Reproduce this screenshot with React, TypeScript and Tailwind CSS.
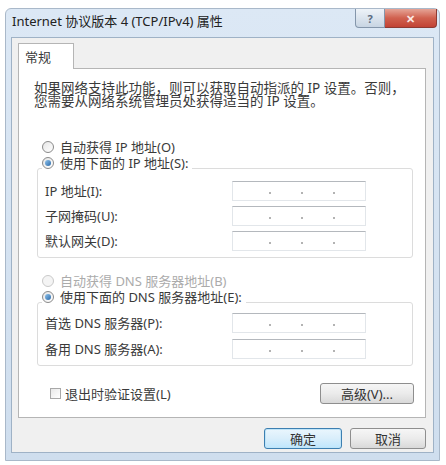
import React from "react";

const font = "font-['Noto_Sans','Noto_Sans_CJK_SC',sans-serif]";

const Radio = ({ checked, disabled }: { checked?: boolean; disabled?: boolean }) => (
  <span
    className={`flex h-[12px] w-[12px] shrink-0 items-center justify-center rounded-full border ${
      disabled ? "border-[#c9c9c9] bg-[#f4f4f4]" : "border-[#8a8a8a] bg-gradient-to-br from-[#e6e6e6] to-[#ffffff]"
    }`}
  >
    {checked && <span className="h-[6px] w-[6px] rounded-full bg-gradient-to-br from-[#8fc3ec] to-[#2a6aa8]" />}
  </span>
);

const RadioRow = ({
  label,
  checked,
  disabled,
  legend,
}: {
  label: string;
  checked?: boolean;
  disabled?: boolean;
  legend?: boolean;
}) => (
  <div
    className={`flex h-[16px] w-fit items-center gap-[6px] ml-[23px] pr-[4px] ${legend ? "relative z-10 bg-white" : ""}`}
  >
    <Radio checked={checked} disabled={disabled} />
    <span className={`text-[13px] leading-[16px] whitespace-pre ${disabled ? "text-[#ababab]" : "text-[#3a3a3a]"}`}>
      {label}
    </span>
  </div>
);

const IpField = () => (
  <div className="flex h-[20px] w-[134px] items-center border border-[#e2e6ea] border-t-[#b4b8bd] bg-white pl-[36px]">
    {[0, 1, 2].map((i) => (
      <span key={i} className="flex w-[33px] pt-[4px]">
        <span className="h-[2px] w-[2px] rounded-full bg-[#9a9a9a]" />
      </span>
    ))}
  </div>
);

const FieldRow = ({ label }: { label: string }) => (
  <div className="flex h-[20px] items-center">
    <span className="w-[187px] text-[13px] leading-[16px] text-[#3a3a3a] whitespace-pre">{label}</span>
    <IpField />
  </div>
);

const Button = ({ label, primary, className = "" }: { label: string; primary?: boolean; className?: string }) => (
  <button
    className={`flex h-[21px] items-center justify-center rounded-[3px] border text-[13px] leading-[16px] text-[#333] ${
      primary
        ? "border-[#3c7fb1] bg-gradient-to-b from-[#eaf6fd] via-[#d9eefb] to-[#bee6fd] shadow-[inset_0_0_0_1px_#bfe4f8]"
        : "border-[#8e8e8e] bg-gradient-to-b from-[#f6f6f6] via-[#ebebeb] to-[#d9d9d9]"
    } ${className}`}
  >
    {label}
  </button>
);

export default function App() {
  return (
    <div className={`h-[465px] w-[446px] bg-white pl-[5px] pt-[8px] ${font}`}>
      <div className="flex h-[453px] w-[435px] flex-col rounded-t-[6px] border border-[#a9b8c9] bg-gradient-to-b from-[#dce8f5] to-[#cfdeee] px-[5px] pb-[7px]">
        {/* title bar */}
        <div className="-mr-[3px] flex h-[28px] items-start justify-between">
          <span className="pl-[1px] pt-[4px] text-[13px] leading-[16px] text-[#222]">
            Internet 协议版本 4 (TCP/IPv4) 属性
          </span>
          <div className="flex">
            <div className="flex h-[19px] w-[30px] items-center justify-center rounded-bl-[4px] border border-t-0 border-[#8496ab] bg-gradient-to-b from-[#eef3f8] to-[#c8d5e3] text-[11px] font-bold leading-none text-[#5a6b80]">
              ?
            </div>
            <div className="flex h-[19px] w-[52px] items-center justify-center rounded-br-[4px] border border-l-0 border-t-0 border-[#8e3a32] bg-gradient-to-b from-[#e5a497] via-[#d0614f] to-[#c24335] text-[11px] font-bold leading-none text-[#fbe9e6]">
              ✕
            </div>
          </div>
        </div>

        {/* client area */}
        <div className="flex flex-1 flex-col border border-[#9fb2c6] bg-[#f0f0f0] pl-[6px] pr-[7px] pt-[5px]">
          <div className="relative z-10 -mb-[1px] flex h-[26px] w-[56px] items-center border border-b-0 border-[#b5b5b5] bg-white pl-[6px]">
            <span className="text-[13px] leading-[16px] text-[#3a3a3a]">常规</span>
          </div>

          <div className="flex h-[350px] flex-col border border-[#b5b5b5] bg-white pt-[13px]">
            <p className="whitespace-nowrap pl-[15px] text-[13.5px] leading-[13px] text-[#3a3a3a]">
              如果网络支持此功能，则可以获取自动指派的 IP 设置。否则，
              <br />
              您需要从网络系统管理员处获得适当的 IP 设置。
            </p>

            <div className="mt-[31px]">
              <RadioRow label="自动获得 IP 地址(O)" />
              <RadioRow label="使用下面的 IP 地址(S):" checked legend />
              <div className="-mt-[3px] ml-[18px] mr-[12px] flex flex-col gap-[5px] rounded-[3px] border border-[#dcdcdc] pb-[6px] pl-[7px] pt-[12px]">
                <FieldRow label="IP 地址(I):" />
                <FieldRow label="子网掩码(U):" />
                <FieldRow label="默认网关(D):" />
              </div>
            </div>

            <div className="mt-[15px]">
              <RadioRow label="自动获得 DNS 服务器地址(B)" disabled />
              <RadioRow label="使用下面的 DNS 服务器地址(E):" checked legend />
              <div className="-mt-[3px] ml-[18px] mr-[12px] flex flex-col gap-[6px] rounded-[3px] border border-[#dcdcdc] pb-[6px] pl-[7px] pt-[10px]">
                <FieldRow label="首选 DNS 服务器(P):" />
                <FieldRow label="备用 DNS 服务器(A):" />
              </div>
            </div>

            <div className="mt-[17px] flex items-center pl-[31px] pr-[11px]">
              <span className="h-[11px] w-[11px] border border-[#a8a8a8] bg-gradient-to-br from-[#e8e8e8] to-white" />
              <span className="ml-[4px] flex-1 text-[13px] leading-[16px] text-[#3a3a3a]">退出时验证设置(L)</span>
              <Button label="高级(V)..." className="w-[94px]" />
            </div>
          </div>

          <div className="mt-[10px] flex justify-end gap-[8px]">
            <Button label="确定" primary className="w-[78px]" />
            <Button label="取消" className="w-[76px]" />
          </div>
        </div>
      </div>
    </div>
  );
}
